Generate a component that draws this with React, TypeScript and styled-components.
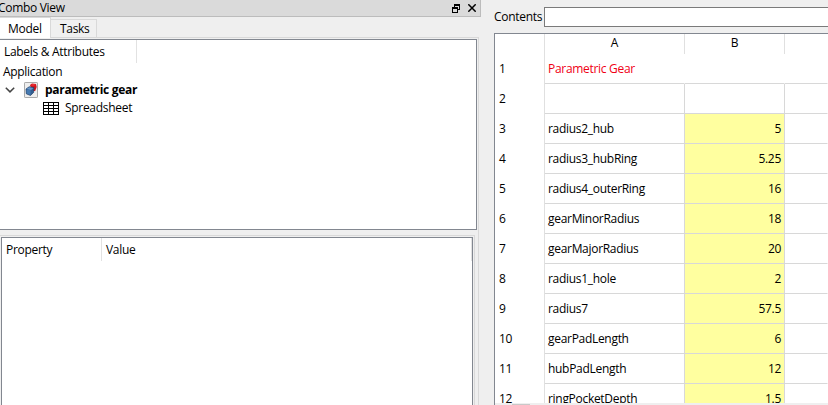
import React from 'react';
import styled, { createGlobalStyle } from 'styled-components';

const Global = createGlobalStyle`
  * { box-sizing: border-box; }
  body { margin: 0; overflow: hidden; }
`;

const Window = styled.div`
  display: grid;
  grid-template-columns: 481px 347px;
  width: 828px;
  height: 405px;
  overflow: hidden;
  background: #efefef;
  color: #000;
  font: 12px/16px "Open Sans", "Noto Sans", sans-serif;
  white-space: nowrap;
`;

const Text = styled.span<{ $ls?: number; $bold?: boolean }>`
  letter-spacing: ${p => p.$ls ?? -0.3}px;
  font-weight: ${p => (p.$bold ? 700 : 400)};
`;

const Dock = styled.section`
  display: flex;
  flex-direction: column;
  height: 405px;
`;

const TitleBar = styled.header`
  display: flex;
  align-items: center;
  height: 18px;
  padding-right: 4px;
  background: #dadada;
  border-right: 1px solid #bcbcbc;
  border-bottom: 1px solid #bcbcbc;
`;

const Title = styled.div`
  flex: 1;
  margin-left: -2px;
`;

const TabBar = styled.nav`
  display: flex;
  align-items: flex-end;
  height: 22px;
  width: 479px;
`;

const Tab = styled.div<{ $active?: boolean; $width: number }>`
  width: ${p => p.$width}px;
  height: ${p => (p.$active ? 21 : 18)}px;
  margin-bottom: ${p => (p.$active ? -1 : 0)}px;
  padding-top: ${p => (p.$active ? 3 : 1)}px;
  padding-left: ${p => (p.$active ? 8 : 9)}px;
  z-index: ${p => (p.$active ? 1 : 0)};
  background: ${p => (p.$active ? '#fff' : '#f0f0f0')};
  border-top: 1px solid #d9d9d9;
  border-right: 1px solid #d9d9d9;
`;

const TabPane = styled.div`
  flex: 1;
  width: 479px;
  padding-top: 1px;
  border-top: 1px solid #d9d9d9;
  border-right: 1px solid #d9d9d9;
`;

const Tree = styled.div`
  width: 477px;
  height: 191px;
  background: #fff;
  border: 1px solid #828790;
  border-left: 0;
`;

const TreeHeader = styled.div`
  width: 137px;
  height: 23px;
  padding: 4px 0 0 4px;
  border-right: 1px solid #e2e2e2;
`;

const TreeRow = styled.div<{ $indent: number }>`
  display: flex;
  align-items: center;
  height: 18px;
  padding-left: ${p => p.$indent}px;
`;

const PropertyFrame = styled.div`
  width: 475px;
  height: 170px;
  margin-top: 5px;
  padding: 1px 1px 0 1px;
  border-top: 1px solid #d9d9d9;
  border-right: 1px solid #d9d9d9;
`;

const PropertyTable = styled.div`
  display: grid;
  grid-template-columns: 100px 1fr;
  width: 472px;
  height: 170px;
  background: #fff;
  border: 1px solid #828790;
`;

const PropertyHeader = styled.div`
  height: 23px;
  padding: 4px 0 0 4px;
  border-right: 1px solid #e2e2e2;
`;

const SheetView = styled.section`
  display: flex;
  flex-direction: column;
  height: 405px;
  padding-left: 13px;
`;

const ContentsBar = styled.div`
  display: flex;
  align-items: center;
  height: 33px;
`;

const ContentsLabel = styled.label`
  width: 50px;
`;

const ContentsInput = styled.div`
  flex: 1;
  height: 20px;
  background: #fff;
  border: 1px solid #7a7a7a;
  border-right: 0;
`;

const Sheet = styled.div`
  height: 370px;
  overflow: hidden;
  background: #fff;
  border-top: 1px solid #828790;
  border-left: 1px solid #828790;
`;

const SheetRow = styled.div<{ $head?: boolean }>`
  display: grid;
  grid-template-columns: 50px 140px 100px 1fr;
  height: ${p => (p.$head ? 20 : 30)}px;
`;

const ColumnHead = styled.div`
  padding-top: 1px;
  text-align: center;
  border-right: 1px solid #e0e0e0;
`;

const RowHead = styled.div`
  padding: 7px 0 0 4px;
  border-right: 1px solid #e0e0e0;
`;

const Cell = styled.div<{ $yellow?: boolean; $number?: boolean; $open?: boolean; $red?: boolean }>`
  padding: 7px 3px 0 3px;
  text-align: ${p => (p.$number ? 'right' : 'left')};
  color: ${p => (p.$red ? '#f00014' : '#000')};
  background: ${p => (p.$yellow ? '#ffff9f' : '#fff')};
  border-right: 1px solid ${p => (p.$open ? 'transparent' : '#d8d8d8')};
  border-bottom: 1px solid #d8d8d8;
`;

const ScrollTrack = styled.div`
  height: 2px;
  background: #efefef;
  border-left: 1px solid #828790;
`;

const ScrollThumb = styled.div`
  width: 18px;
  height: 1px;
  margin: 1px 0 0 17px;
  background: #c9c9c9;
`;

const Icon = styled.svg<{ $right?: number }>`
  display: block;
  flex: none;
  margin-right: ${p => p.$right ?? 0}px;
`;

const RestoreIcon = () => (
  <Icon $right={8} width="8" height="9" viewBox="0 0 8 9" fill="none" stroke="#000" shapeRendering="crispEdges">
    <path d="M2.5 3V.5h5v5H6M2 1.5h6" />
    <path d="M.5 3.5h5v5h-5zM0 4.5h6" />
  </Icon>
);

const CloseIcon = () => (
  <Icon width="8" height="8" viewBox="0 0 8 8" fill="none" stroke="#000" strokeWidth="1.5">
    <path d="M.3.3l7.4 7.4M7.7.3L.3 7.7" />
  </Icon>
);

const ChevronIcon = () => (
  <Icon $right={9} width="10" height="6" viewBox="0 0 10 6" fill="none" stroke="#444" strokeWidth="1.5">
    <path d="M.8.7L5 4.9 9.2.7" />
  </Icon>
);

const DocumentIcon = () => (
  <Icon $right={7} width="14" height="16" viewBox="0 0 14 16">
    <rect x=".5" y=".5" width="13" height="15" rx=".6" fill="#eee" stroke="#aaa" />
    <path d="M6 3l2-1.5 4 .5.7 3-1.5 4L8 9z" fill="#d2161c" />
    <path d="M6.5 3.2L9 2l3 .8-2.5 1z" fill="#f0343a" />
    <path d="M2 7l3.2-2.2L10 5.6 9.6 10.5 6.5 13.5 2.3 11.8z" fill="#315d91" stroke="#203e66" strokeWidth=".7" />
    <path d="M2.3 7l3-1.8 4.2.7L7 8z" fill="#6797c9" />
    <path d="M2.5 7.4L6.7 8.3 6.4 13l-3.7-1.5z" fill="#467bb2" />
  </Icon>
);

const SpreadsheetIcon = () => (
  <Icon $right={6} width="16" height="13" viewBox="0 0 16 13" fill="none" stroke="#000" shapeRendering="crispEdges">
    <path d="M.5.5h15v12H.5zM0 3.5h16M0 6.5h16M0 9.5h16M5.5 0v13M10.5 0v13" />
  </Icon>
);

const rows: [string, string][] = [
  ['radius2_hub', '5'],
  ['radius3_hubRing', '5.25'],
  ['radius4_outerRing', '16'],
  ['gearMinorRadius', '18'],
  ['gearMajorRadius', '20'],
  ['radius1_hole', '2'],
  ['radius7', '57.5'],
  ['gearPadLength', '6'],
  ['hubPadLength', '12'],
  ['ringPocketDepth', '1.5'],
];

export default function App() {
  return (
    <Window>
      <Global />
      <Dock>
        <TitleBar>
          <Title><Text>Combo View</Text></Title>
          <RestoreIcon />
          <CloseIcon />
        </TitleBar>
        <TabBar>
          <Tab $active $width={51}><Text>Model</Text></Tab>
          <Tab $width={46}><Text>Tasks</Text></Tab>
        </TabBar>
        <TabPane>
          <Tree>
            <TreeHeader><Text>Labels &amp; Attributes</Text></TreeHeader>
            <TreeRow $indent={3}><Text>Application</Text></TreeRow>
            <TreeRow $indent={5}>
              <ChevronIcon />
              <DocumentIcon />
              <Text $bold>parametric gear</Text>
            </TreeRow>
            <TreeRow $indent={43}>
              <SpreadsheetIcon />
              <Text>Spreadsheet</Text>
            </TreeRow>
          </Tree>
          <PropertyFrame>
            <PropertyTable>
              <PropertyHeader><Text>Property</Text></PropertyHeader>
              <PropertyHeader><Text>Value</Text></PropertyHeader>
            </PropertyTable>
          </PropertyFrame>
        </TabPane>
      </Dock>
      <SheetView>
        <ContentsBar>
          <ContentsLabel><Text>Contents</Text></ContentsLabel>
          <ContentsInput />
        </ContentsBar>
        <Sheet>
          <SheetRow $head>
            <ColumnHead />
            <ColumnHead><Text>A</Text></ColumnHead>
            <ColumnHead><Text>B</Text></ColumnHead>
            <div />
          </SheetRow>
          <SheetRow>
            <RowHead><Text>1</Text></RowHead>
            <Cell $open $red><Text>Parametric Gear</Text></Cell>
            <Cell $open />
            <Cell $open />
          </SheetRow>
          <SheetRow>
            <RowHead><Text>2</Text></RowHead>
            <Cell />
            <Cell />
            <Cell $open />
          </SheetRow>
          {rows.map(([name, value], i) => (
            <SheetRow key={name}>
              <RowHead><Text>{i + 3}</Text></RowHead>
              <Cell><Text>{name}</Text></Cell>
              <Cell $yellow $number><Text>{value}</Text></Cell>
              <Cell $open />
            </SheetRow>
          ))}
        </Sheet>
        <ScrollTrack><ScrollThumb /></ScrollTrack>
      </SheetView>
    </Window>
  );
}
